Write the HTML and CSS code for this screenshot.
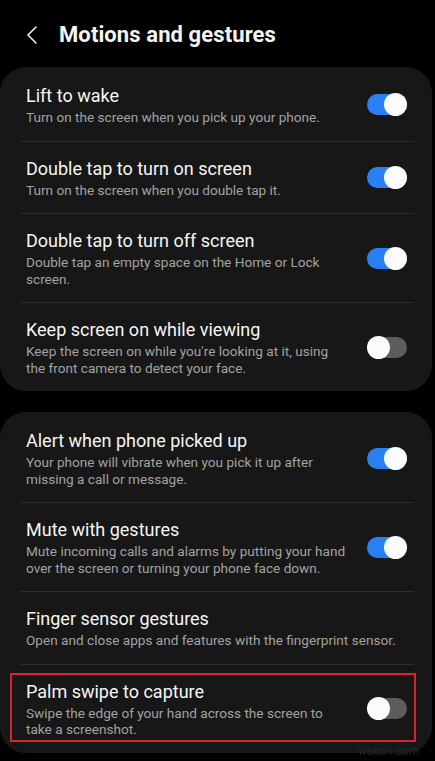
FILE: index.html
```html
<!DOCTYPE html>
<html lang="en">
<head>
  <meta charset="UTF-8">
  <title>Motions and gestures</title>
  <link rel="stylesheet" href="styles.css">
</head>
<body>

  <div class="header">
    <svg class="back" width="14" height="20" viewBox="0 0 14 20">
      <path d="M11 2 L3 10 L11 18" fill="none" stroke="#f2f2f2" stroke-width="1.6" stroke-linecap="round" stroke-linejoin="round"/>
    </svg>
    <h1>Motions and gestures</h1>
  </div>

  <!-- Primer grupo -->
  <div class="card">
    <div class="row">
      <div class="text">
        <div class="title">Lift to wake</div>
        <div class="sub">Turn on the screen when you pick up your phone.</div>
      </div>
      <div class="switch on"></div>
    </div>
    <div class="row">
      <div class="text">
        <div class="title">Double tap to turn on screen</div>
        <div class="sub">Turn on the screen when you double tap it.</div>
      </div>
      <div class="switch on"></div>
    </div>
    <div class="row">
      <div class="text">
        <div class="title">Double tap to turn off screen</div>
        <div class="sub">Double tap an empty space on the Home or Lock screen.</div>
      </div>
      <div class="switch on"></div>
    </div>
    <div class="row">
      <div class="text">
        <div class="title">Keep screen on while viewing</div>
        <div class="sub">Keep the screen on while you're looking at it, using the front camera to detect your face.</div>
      </div>
      <div class="switch"></div>
    </div>
  </div>

  <!-- Segundo grupo -->
  <div class="card">
    <div class="row">
      <div class="text">
        <div class="title">Alert when phone picked up</div>
        <div class="sub">Your phone will vibrate when you pick it up after missing a call or message.</div>
      </div>
      <div class="switch on"></div>
    </div>
    <div class="row">
      <div class="text">
        <div class="title">Mute with gestures</div>
        <div class="sub">Mute incoming calls and alarms by putting your hand over the screen or turning your phone face down.</div>
      </div>
      <div class="switch on"></div>
    </div>
    <div class="row">
      <div class="text wide">
        <div class="title">Finger sensor gestures</div>
        <div class="sub">Open and close apps and features with the fingerprint sensor.</div>
      </div>
    </div>
    <div class="row marked">
      <div class="text">
        <div class="title">Palm swipe to capture</div>
        <div class="sub">Swipe the edge of your hand across the screen to take a screenshot.</div>
      </div>
      <div class="switch"></div>
    </div>
    <div class="watermark">wsxdn.com</div>
  </div>

</body>
</html>
```

FILE: styles.css
```css
body {
  background-color: #000;
  font-family: Roboto, "Noto Sans", sans-serif;
  color: #f5f5f5;
  margin: 0;
  width: 435px;
}

.header {
  display: flex;
  align-items: center;
  height: 67px;
  padding-left: 25px;
  box-sizing: border-box;
}

.back {
  margin-top: 3px;
}

h1 {
  font-size: 22px;
  font-weight: 700;
  margin: 2px 0 0 20px;
  letter-spacing: 0.1px;
}

.card {
  position: relative;
  background-color: #171717;
  border-radius: 26px;
  margin: 0 3px 21px 0;
  padding: 2px 18px 0 21px;
}

.row {
  display: flex;
  align-items: center;
  padding: 15px 7px 15px 5px;
  border-top: 1px solid #2e2e2e;
}

.row:first-child {
  border-top: none;
}

.text {
  flex: 1;
  max-width: 322px;
}

.text.wide {
  max-width: none;
}

.title {
  font-size: 18px;
  line-height: 24px;
}

.sub {
  font-size: 13.6px;
  line-height: 16.5px;
  color: #a2a2a2;
  margin-top: 1px;
}

.switch {
  position: relative;
  width: 40px;
  height: 21px;
  border-radius: 11px;
  background-color: #5c5c5c;
  margin-left: auto;
  flex-shrink: 0;
}

.switch::after {
  content: "";
  position: absolute;
  top: -1px;
  left: 0;
  width: 23px;
  height: 23px;
  border-radius: 50%;
  background-color: #fbfbfb;
}

.switch.on {
  background-color: #2880f4;
}

.switch.on::after {
  left: 17px;
}

.marked {
  position: relative;
}

.marked::after {
  content: "";
  position: absolute;
  left: -11px;
  right: -2px;
  top: 8px;
  bottom: 11px;
  border: 2.5px solid #d9232e;
}

.watermark {
  position: absolute;
  right: 13px;
  bottom: -5px;
  font-size: 12px;
  color: #262626;
}
```
